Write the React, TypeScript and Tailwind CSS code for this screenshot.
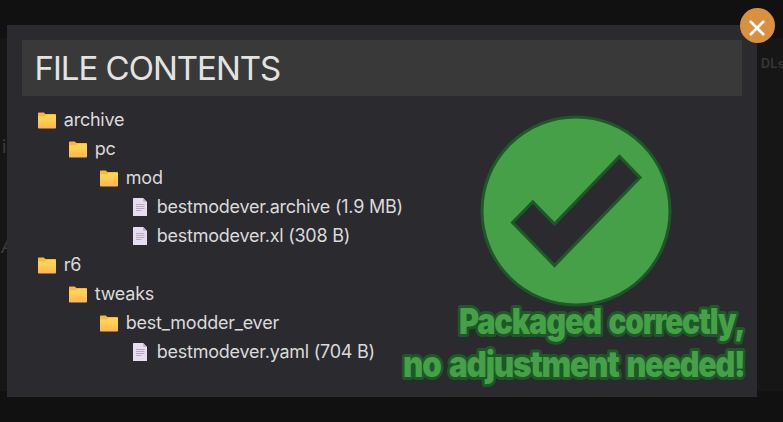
type Entry = { name: string; depth: number; file?: boolean };

const entries: Entry[] = [
  { name: "archive", depth: 0 },
  { name: "pc", depth: 1 },
  { name: "mod", depth: 2 },
  { name: "bestmodever.archive (1.9 MB)", depth: 3, file: true },
  { name: "bestmodever.xl (308 B)", depth: 3, file: true },
  { name: "r6", depth: 0 },
  { name: "tweaks", depth: 1 },
  { name: "best_modder_ever", depth: 2 },
  { name: "bestmodever.yaml (704 B)", depth: 3, file: true },
];

const indents = ["pl-[16px]", "pl-[47px]", "pl-[78px]", "pl-[109px]"];

function FolderIcon() {
  return (
    <svg viewBox="0 0 18 17" className="mt-[2px] h-[17px] w-[18px] shrink-0">
      <defs>
        <linearGradient id="folder" x1="0" y1="0" x2="0" y2="1">
          <stop offset="0" stopColor="#ffd64f" />
          <stop offset="0.35" stopColor="#ffd052" />
          <stop offset="1" stopColor="#ffb357" />
        </linearGradient>
      </defs>
      <path d="M0 1.3Q0 .5.8.5h5L7.4 2h9.8q.8 0 .8.8V8H0z" fill="#fcb73c" />
      <path d="M0 4.2h6.8L8.6 3h8.6q.8 0 .8.8v11.9q0 .8-.8.8H.8q-.8 0-.8-.8z" fill="url(#folder)" />
    </svg>
  );
}

function FileIcon() {
  return (
    <svg viewBox="0 0 14 18" className="mx-[2px] mt-[1px] h-[18px] w-[14px] shrink-0">
      <path d="M.6 0H10l4 4v13.4q0 .6-.6.6H.6q-.6 0-.6-.6V.6Q0 0 .6 0z" fill="#e8ddf0" />
      <path d="M10 0l4 4h-3.3q-.7 0-.7-.7z" fill="#c3b5cd" />
      <path d="M3 6.5h8.5M3 8.5h8.5M3 10.5h8.5M3 12.5h5.5" stroke="#aaa0b3" strokeWidth="0.8" />
    </svg>
  );
}

function Approval() {
  return (
    <svg viewBox="0 0 350 286" className="h-[286px] w-[350px] overflow-visible">
      <path
        fillRule="evenodd"
        d="M176 6a94 94 0 1 0 0 188a94 94 0 1 0 0-188zM112.5 111.5l20.3-20.5 21.7 22 65-67.5 20.5 21L154.5 154.5z"
        fill="#45a047"
        stroke="#1e5828"
        strokeWidth="3"
      />
      <g
        className="font-['Inter',sans-serif] text-[35.5px] font-black tracking-[-1.4px]"
        fill="#45a047"
        stroke="#1e5828"
        strokeWidth="6"
        strokeLinejoin="round"
        paintOrder="stroke"
      >
        <text x="59" y="222.7" textLength="142" lengthAdjust="spacingAndGlyphs">Packaged</text>
        <text x="208.5" y="222.7" textLength="136" lengthAdjust="spacingAndGlyphs">correctly,</text>
        <text x="3" y="265.7" textLength="37.5" lengthAdjust="spacingAndGlyphs">no</text>
        <text x="49" y="265.7" textLength="169.5" lengthAdjust="spacingAndGlyphs">adjustment</text>
        <text x="226.5" y="265.7" textLength="118" lengthAdjust="spacingAndGlyphs">needed!</text>
      </g>
    </svg>
  );
}

export default function App() {
  return (
    <main className="relative h-[422px] w-[783px] overflow-hidden bg-[#111111] pt-[38px] font-['Inter',sans-serif]">
      <div className="flex h-[353px] justify-between bg-[#161616]">
        <div className="flex flex-col gap-[73px] pl-[1px] pt-[95px] text-[18px] leading-[27px] text-[#3c3c3c]">
          <span className="pl-[1px]">i</span>
          <span className="italic">A</span>
        </div>
        <span className="w-[22px] pt-[18px] text-[12.5px] font-bold leading-[16px] tracking-[0.3px] text-[#343434]">DLs</span>
      </div>
      <section className="absolute left-[7px] top-[25px] h-[372px] w-[750px] bg-[#2b2a2f] p-[15px]">
        <h1 className="h-[56px] whitespace-nowrap bg-[#393939] pl-[12.5px] text-[33px] font-normal leading-[57px] tracking-[-1px] text-[#e3e3e3]">
          FILE CONTENTS
        </h1>
        <div className="flex">
          <ul className="w-[378px] shrink-0 pt-[9px]">
            {entries.map((e) => (
              <li key={e.name} className={`flex h-[29px] items-center ${indents[e.depth]}`}>
                {e.file ? <FileIcon /> : <FolderIcon />}
                <span className="ml-[7.8px] whitespace-nowrap text-[18px] leading-[29px] tracking-[-0.24px] text-[#dadada]">
                  {e.name}
                </span>
              </li>
            ))}
          </ul>
          <div className="mt-[15px]">
            <Approval />
          </div>
        </div>
        <button
          aria-label="Close"
          className="absolute -right-[18px] -top-[17px] flex h-[35px] w-[35px] items-center justify-center rounded-full bg-[#d99041]"
        >
          <svg viewBox="0 0 16 16" className="mr-[1px] mt-[5px] h-[16px] w-[16px]">
            <path d="M1 1l14 14M15 1L1 15" stroke="#fff" strokeWidth="2.7" />
          </svg>
        </button>
      </section>
    </main>
  );
}
